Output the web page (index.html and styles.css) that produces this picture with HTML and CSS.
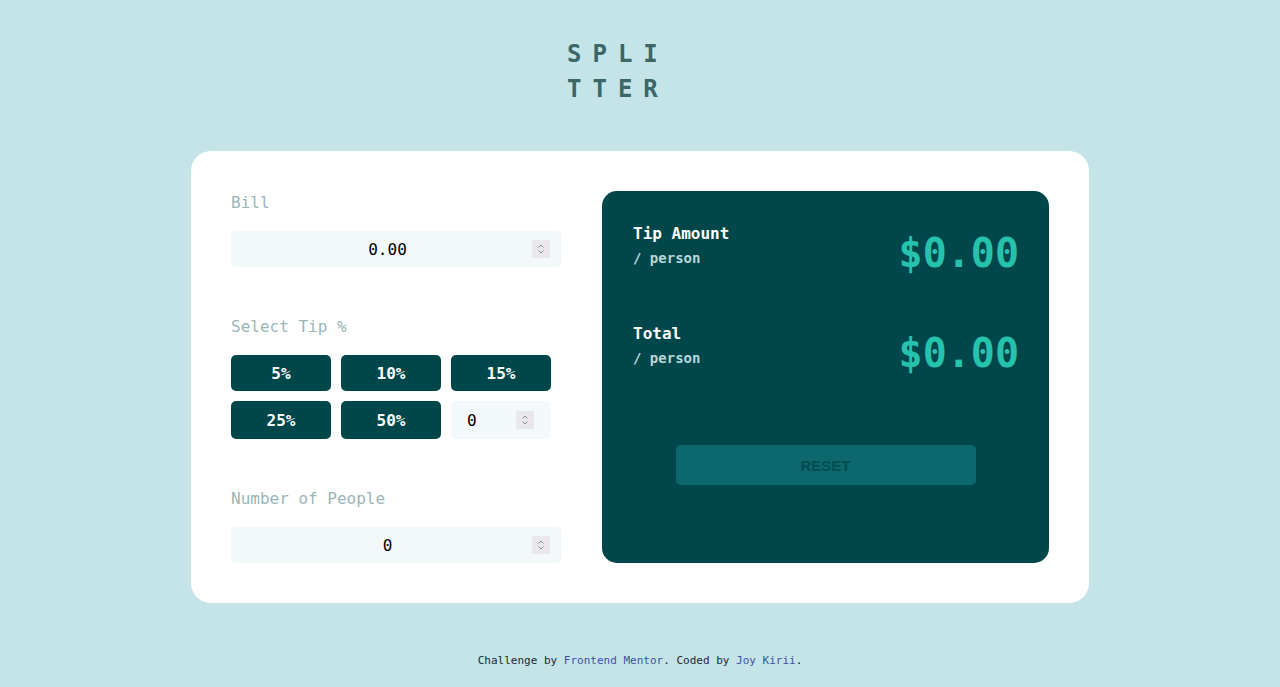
FILE: index.html
```html
<!DOCTYPE html>
<html lang="en">
<head>
<meta charset="utf-8">
<title>Splitter</title>
<link rel="stylesheet" href="styles.css">
</head>
<body>
<main class="page">
  <header class="header">
    <h1 class="logo">SPLITTER</h1>
  </header>

  <section class="card">
    <div class="inputs">
      <div class="group">
        <label class="label" for="bill">Bill</label>
        <div class="field">
          <input id="bill" class="field-input" type="text" value="0.00">
          <span class="spinner"><svg viewBox="0 0 18 18" width="18" height="18"><path d="M6.5 7.5 L9 5 L11.5 7.5 M6.5 10.5 L9 13 L11.5 10.5" fill="none" stroke="#8e8e93" stroke-width="1"/></svg></span>
        </div>
      </div>

      <div class="group">
        <span class="label">Select Tip %</span>
        <div class="tips">
          <button class="tip">5%</button>
          <button class="tip">10%</button>
          <button class="tip">15%</button>
          <button class="tip">25%</button>
          <button class="tip">50%</button>
          <div class="field field-custom">
            <input class="field-input custom-input" type="text" value="0">
            <span class="spinner"><svg viewBox="0 0 18 18" width="18" height="18"><path d="M6.5 7.5 L9 5 L11.5 7.5 M6.5 10.5 L9 13 L11.5 10.5" fill="none" stroke="#8e8e93" stroke-width="1"/></svg></span>
          </div>
        </div>
      </div>

      <div class="group">
        <label class="label" for="people">Number of People</label>
        <div class="field">
          <input id="people" class="field-input" type="text" value="0">
          <span class="spinner"><svg viewBox="0 0 18 18" width="18" height="18"><path d="M6.5 7.5 L9 5 L11.5 7.5 M6.5 10.5 L9 13 L11.5 10.5" fill="none" stroke="#8e8e93" stroke-width="1"/></svg></span>
        </div>
      </div>
    </div>

    <div class="results">
      <div class="row">
        <div class="row-text">
          <div class="row-title">Tip Amount</div>
          <div class="row-sub">/ person</div>
        </div>
        <div class="amount">$0.00</div>
      </div>
      <div class="row">
        <div class="row-text">
          <div class="row-title">Total</div>
          <div class="row-sub">/ person</div>
        </div>
        <div class="amount">$0.00</div>
      </div>
      <button class="reset">RESET</button>
    </div>
  </section>

  <footer class="footer">
    Challenge by <a href="#" class="link">Frontend Mentor</a>. Coded by <a href="#" class="link">Joy Kirii</a>.
  </footer>
</main>
</body>
</html>
```

FILE: styles.css
```css
* {
  box-sizing: border-box;
}

html, body {
  margin: 0;
  padding: 0;
}

body {
  background: #c5e4e7;
  font-family: "DejaVu Sans Mono", "Liberation Mono", monospace;
  color: #00474b;
}

.page {
  padding-top: 37px;
  display: flex;
  flex-direction: column;
  align-items: center;
}

.header {
  display: flex;
  justify-content: center;
  width: 100%;
}

.logo {
  margin: 0 36px 0 0;
  width: 110px;
  font-size: 24px;
  line-height: 35px;
  font-weight: bold;
  letter-spacing: 11px;
  color: #3d6666;
  word-break: break-all;
}

.card {
  margin-top: 44px;
  width: 898px;
  background: #ffffff;
  border-radius: 20px;
  padding: 40px;
  display: grid;
  grid-template-columns: 331px 1fr;
  column-gap: 40px;
}

.inputs {
  display: flex;
  flex-direction: column;
  gap: 48px;
}

.group {
  display: flex;
  flex-direction: column;
}

.label {
  font-size: 16px;
  line-height: 24px;
  color: #9ab5b7;
  margin-bottom: 16px;
}

.field {
  display: flex;
  align-items: center;
  height: 36px;
  padding: 0 12px;
  background: #f3f8fb;
  border-radius: 5px;
}

.field-input {
  flex: 1;
  min-width: 0;
  border: none;
  background: transparent;
  outline: none;
  padding: 0;
  font-family: "DejaVu Sans Mono", "Liberation Mono", monospace;
  font-size: 16px;
  color: #000000;
  text-align: center;
}

.spinner {
  width: 18px;
  height: 18px;
  background: #e8e8ed;
  display: flex;
}

.tips {
  display: grid;
  grid-template-columns: repeat(3, 100px);
  grid-template-rows: 36px 38px;
  gap: 10px;
}

.tip {
  border: none;
  border-radius: 5px;
  background: #00474b;
  color: #ffffff;
  font-family: "DejaVu Sans Mono", "Liberation Mono", monospace;
  font-size: 16px;
  font-weight: bold;
  padding: 0;
}

.field-custom {
  height: 38px;
  padding: 0 17px 0 16px;
}

.custom-input {
  text-align: left;
}

.results {
  background: #00474b;
  border-radius: 15px;
  padding: 31px 30px 0 31px;
  display: flex;
  flex-direction: column;
  gap: 45px;
}

.row {
  display: flex;
  justify-content: space-between;
  align-items: flex-start;
}

.row-title {
  font-size: 16px;
  line-height: 24px;
  font-weight: bold;
  color: #ffffff;
}

.row-sub {
  margin-top: 2px;
  font-size: 14px;
  line-height: 20px;
  font-weight: bold;
  color: #b9d6d8;
}

.amount {
  margin-top: 7px;
  font-size: 40px;
  line-height: 48px;
  font-weight: bold;
  color: #26c2ae;
}

.reset {
  align-self: center;
  margin-top: 23px;
  margin-right: 1px;
  width: 300px;
  height: 40px;
  border: none;
  border-radius: 5px;
  background: #0d686d;
  color: #034d51;
  font-family: "Liberation Sans", Arial, sans-serif;
  font-size: 15px;
  font-weight: bold;
}

.footer {
  margin-top: 50px;
  font-size: 11px;
  line-height: 15px;
  color: #1f2433;
  text-align: center;
}

.link {
  color: #3e52a3;
  text-decoration: none;
}
```
